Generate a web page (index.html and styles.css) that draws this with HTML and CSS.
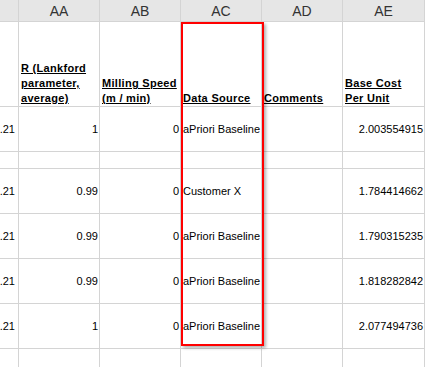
FILE: index.html
```html
<!DOCTYPE html>
<html>
<head>
<meta charset="utf-8">
<link rel="stylesheet" href="styles.css">
</head>
<body>
<div class="sheet">
  <div class="grid">
    <div class="ch"></div>
    <div class="ch">AA</div>
    <div class="ch">AB</div>
    <div class="ch">AC</div>
    <div class="ch">AD</div>
    <div class="ch">AE</div>

    <div class="c"></div>
    <div class="c hd"><span>R (Lankford parameter, average)</span></div>
    <div class="c hd"><span>Milling Speed (m / min)</span></div>
    <div class="c hd"><span>Data Source</span></div>
    <div class="c hd"><span>Comments</span></div>
    <div class="c hd"><span>Base Cost<br>Per Unit</span></div>

    <div class="c num cut">0.21</div>
    <div class="c num">1</div>
    <div class="c num">0</div>
    <div class="c txt">aPriori Baseline</div>
    <div class="c"></div>
    <div class="c num">2.003554915</div>

    <div class="c"></div><div class="c"></div><div class="c"></div><div class="c"></div><div class="c"></div><div class="c"></div>

    <div class="c num cut">0.21</div>
    <div class="c num">0.99</div>
    <div class="c num">0</div>
    <div class="c txt">Customer X</div>
    <div class="c"></div>
    <div class="c num">1.784414662</div>

    <div class="c num cut">0.21</div>
    <div class="c num">0.99</div>
    <div class="c num">0</div>
    <div class="c txt">aPriori Baseline</div>
    <div class="c"></div>
    <div class="c num">1.790315235</div>

    <div class="c num cut">0.21</div>
    <div class="c num">0.99</div>
    <div class="c num">0</div>
    <div class="c txt">aPriori Baseline</div>
    <div class="c"></div>
    <div class="c num">1.818282842</div>

    <div class="c num cut">0.21</div>
    <div class="c num">1</div>
    <div class="c num">0</div>
    <div class="c txt">aPriori Baseline</div>
    <div class="c"></div>
    <div class="c num">2.077494736</div>

    <div class="c"></div><div class="c"></div><div class="c"></div><div class="c"></div><div class="c"></div><div class="c"></div>
  </div>
  <div class="highlight"></div>
</div>
</body>
</html>
```

FILE: styles.css
```css
html, body {
  margin: 0;
  padding: 0;
  background: #ffffff;
  overflow: hidden;
}

.sheet {
  position: relative;
  width: 425px;
  height: 367px;
  overflow: hidden;
  font-family: "Liberation Sans", Arial, sans-serif;
  font-size: 11px;
  color: #000;
}

.grid {
  display: grid;
  grid-template-columns: 18px 80px 80px 80px 80px 81px;
  grid-template-rows: 21px 84px 44px 16px 44px 44px 44px 44px 30px;
  gap: 1px;
  background: #d4d4d4;
  width: 424px;
  border-right: 1px solid #d4d4d4;
}

.ch {
  background: #e6e6e6;
  font-size: 14px;
  color: #333;
  display: flex;
  align-items: center;
  justify-content: center;
  padding-top: 1px;
}

.c {
  background: #fff;
  display: flex;
  align-items: center;
  overflow: hidden;
  white-space: nowrap;
}

.hd {
  align-items: flex-end;
  padding: 0 1px 0 2px;
  white-space: normal;
  font-weight: bold;
  line-height: 15px;
  letter-spacing: 0.3px;
}

.hd span {
  text-decoration: underline;
}

.num {
  justify-content: flex-end;
  padding-right: 1px;
}

.cut {
  padding-right: 3px;
}

.txt {
  padding-left: 2px;
}

.highlight {
  position: absolute;
  left: 181px;
  top: 22px;
  width: 79px;
  height: 320px;
  border: 2px solid #ff0000;
  box-shadow: 2px 2px 3px rgba(0, 0, 0, 0.3);
  pointer-events: none;
}
```
